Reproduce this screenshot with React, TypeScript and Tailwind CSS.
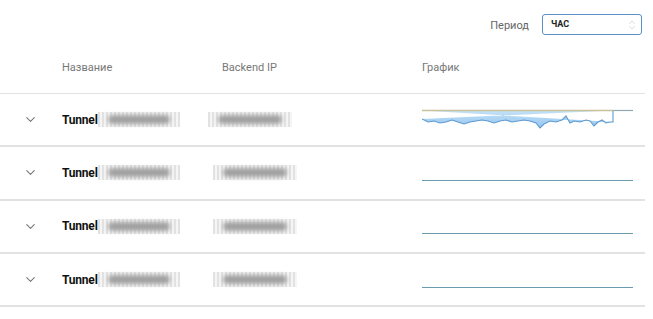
import { ChevronDown, ChevronsUpDown } from "lucide-react";

const ROWS = [
  { id: 1, ipOffset: "ml-0", active: true },
  { id: 2, ipOffset: "ml-[5px]", active: false },
  { id: 3, ipOffset: "ml-[5px]", active: false },
  { id: 4, ipOffset: "ml-[5px]", active: false },
];

// rough traffic profile for the first tunnel (x, y) inside a 212x24 box
const PROFILE: [number, number][] = [
  [0, 11], [6, 14], [12, 13], [18, 15], [24, 14], [30, 12], [36, 14], [42, 16], [48, 14],
  [54, 13], [60, 12], [66, 13], [72, 15], [78, 13], [84, 12], [90, 14], [96, 13], [102, 12],
  [108, 13], [114, 15], [118, 20], [122, 16], [128, 13], [134, 14], [140, 12], [144, 8],
  [148, 15], [152, 13], [158, 14], [164, 12], [168, 13], [172, 18], [176, 14], [180, 12],
  [184, 15], [188, 14], [191, 14],
];

function Chart({ active }: { active: boolean }) {
  if (!active) {
    return (
      <svg width="212" height="24" viewBox="0 0 212 24">
        <line x1="0" y1="19.5" x2="211" y2="19.5" stroke="#6a9db3" strokeWidth="1.2" />
      </svg>
    );
  }
  const bottom = PROFILE.map(([x, y]) => `${x},${y}`).join(" L");
  return (
    <svg width="212" height="24" viewBox="0 0 212 24">
      <defs>
        <linearGradient id="fill" x1="0" y1="0" x2="0" y2="1">
          <stop offset="0" stopColor="#c4e1f8" />
          <stop offset="1" stopColor="#94c6ee" />
        </linearGradient>
      </defs>
      <path d={`M0,2.5 L191,2.5 L${bottom} Z`} fill="url(#fill)" />
      <path d={`M${bottom} L191,2.5`} fill="none" stroke="#5f9bd0" strokeWidth="1.1" />
      <line x1="0" y1="2.5" x2="191" y2="2.5" stroke="#c9c19a" strokeWidth="1.4" />
      <line x1="191" y1="2.5" x2="211" y2="2.5" stroke="#8fa9ad" strokeWidth="1.2" />
    </svg>
  );
}

function Blob({ className }: { className: string }) {
  return (
    <div className={`relative h-[15px] ${className} bg-[repeating-linear-gradient(90deg,#e2e2e2_0px,#e2e2e2_2px,#f5f5f5_2px,#f5f5f5_4px)]`}>
      <div className="absolute inset-x-[10px] inset-y-[3px] rounded-full bg-[#a0a0a0] blur-[2px]" />
    </div>
  );
}

export default function App() {
  return (
    <div className="w-[653px] h-[319px] bg-white font-['Roboto',sans-serif] overflow-hidden">
      <div className="h-[50px] flex items-start justify-end pt-[14px] pr-[11px]">
        <span className="text-[11px] text-[#666] mt-[4px] mr-[13px]">Период</span>
        <div className="w-[100px] h-[21px] border border-[#5b8fc7] rounded-[3px] flex items-center justify-between pl-[8px] pr-[3px]">
          <span className="text-[9px] font-bold text-[#222]">ЧАС</span>
          <ChevronsUpDown size={12} strokeWidth={1.5} className="text-[#d0d0d0]" />
        </div>
      </div>

      <div className="w-[645px]">
        <div className="grid grid-cols-[62px_146px_214px_1fr] h-[44px] items-center text-[11px] text-[#777] border-b border-[#e2e2e2]">
          <span />
          <span className="mt-[-6px]">Название</span>
          <span className="pl-[14px] mt-[-6px]">Backend IP</span>
          <span className="mt-[-6px]">График</span>
        </div>

        {ROWS.map((row) => (
          <div
            key={row.id}
            className="grid grid-cols-[62px_146px_214px_1fr] h-[53.3px] items-center border-b-2 border-[#e2e2e2]"
          >
            <div className="flex justify-center pr-[2px]">
              <ChevronDown size={15} strokeWidth={1.8} className="text-[#777]" />
            </div>
            <div className="flex items-center">
              <span className="text-[12px] font-bold text-[#111] tracking-[-0.2px]">Tunnel</span>
              <Blob className="w-[82px]" />
            </div>
            <div className="flex items-center">
              <Blob className={`w-[84px] ${row.ipOffset}`} />
            </div>
            <div className="flex items-center">
              <Chart active={row.active} />
            </div>
          </div>
        ))}
      </div>
    </div>
  );
}
